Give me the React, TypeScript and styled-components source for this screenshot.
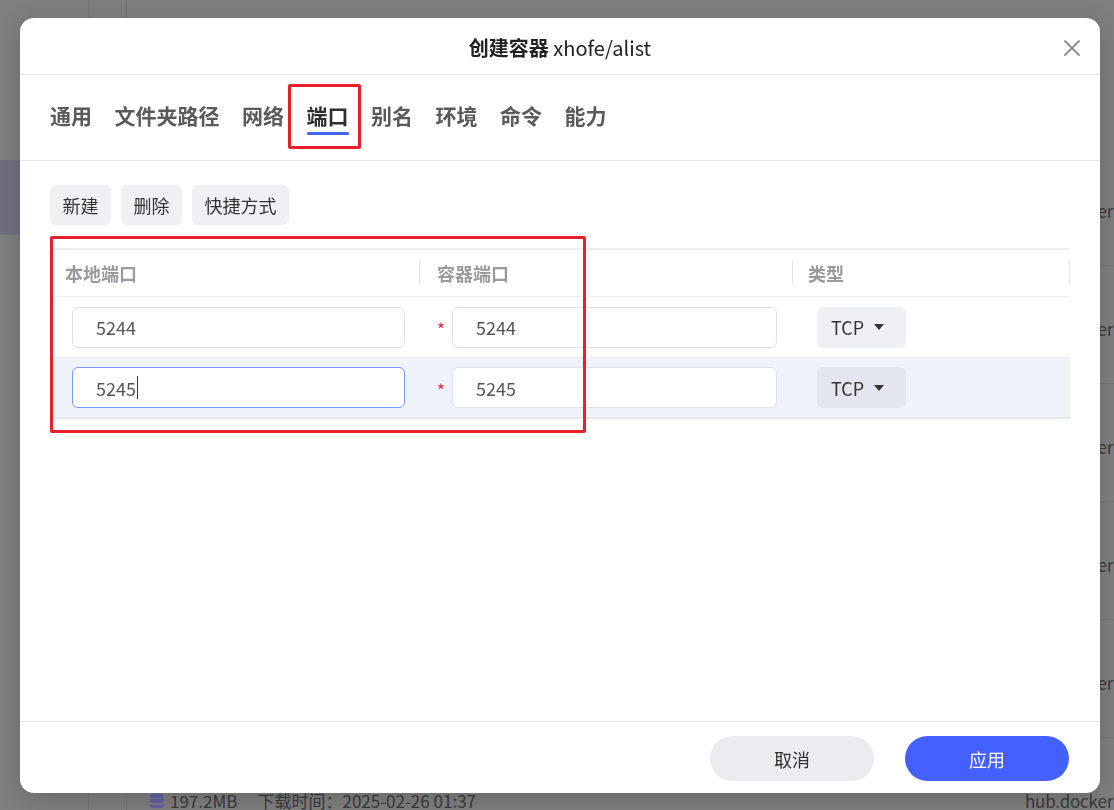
import React from 'react'
import styled, { createGlobalStyle } from 'styled-components'

const GlobalStyle = createGlobalStyle`
  html, body {
    margin: 0;
    padding: 0;
  }
  body {
    width: 1114px;
    height: 810px;
    overflow: hidden;
    background: #7f7f7f;
    font-family: "Noto Sans CJK SC", "Noto Sans", sans-serif;
  }
  * {
    box-sizing: border-box;
  }
`

/* backdrop page (dimmed behind the dialog) */

const Page = styled.div`
  display: flex;
  height: 810px;
  overflow: hidden;
`

const Sidebar = styled.div`
  width: 89px;
  padding-top: 160px;
  border-right: 1px solid #747474;
`

const SideItem = styled.div`
  height: 75px;
  background: #6f707d;
`

const Rail = styled.div`
  width: 38px;
  border-right: 1px solid #747474;
`

const Main = styled.div`
  flex: 1;
  display: flex;
  flex-direction: column;
  min-width: 0;
  overflow: hidden;
`

const MainTop = styled.div`
  height: 148px;
  flex-shrink: 0;
`

const ListRow = styled.div`
  height: 118px;
  flex-shrink: 0;
  padding: 50px 0 0 22px;
  border-bottom: 1px solid #757575;
`

const Meta = styled.div`
  display: grid;
  grid-template-columns: 1fr 89px;
  align-items: center;
  height: 24px;
  font-size: 17px;
  color: #3a3a3a;
  white-space: nowrap;
`

const MetaLeft = styled.div`
  display: flex;
  align-items: center;
  gap: 6px;
`

const MetaTime = styled.span`
  margin-left: 14px;
`

const Source = styled.div`
  font-size: 17px;
  letter-spacing: -0.2px;
`

/* dialog */

const Overlay = styled.div`
  position: fixed;
  inset: 0;
  display: flex;
  padding: 18px 14px 17px 20px;
`

const Modal = styled.div`
  position: relative;
  flex: 1;
  display: flex;
  flex-direction: column;
  background: #fff;
  border-radius: 14px;
  box-shadow: 0 6px 24px rgba(0, 0, 0, 0.18);
  overflow: hidden;
`

const TitleBar = styled.div`
  display: grid;
  grid-template-columns: 1fr auto 1fr;
  align-items: center;
  height: 57px;
  flex-shrink: 0;
  border-bottom: 1px solid #e6e6e9;
`

const Title = styled.div`
  grid-column: 2;
  font-size: 20px;
  color: #222;
  padding-top: 3px;
`

const TitleStrong = styled.span`
  font-weight: 700;
`

const CloseButton = styled.div`
  grid-column: 3;
  justify-self: end;
  margin-right: 19px;
  width: 18px;
  height: 18px;
  display: flex;
  padding-top: 2px;
`

const TabBar = styled.div`
  display: flex;
  align-items: center;
  gap: 22.5px;
  height: 86px;
  flex-shrink: 0;
  padding: 0 30px;
  border-bottom: 1px solid #ececef;
`

const Tab = styled.div<{ $active?: boolean }>`
  display: flex;
  flex-direction: column;
  align-items: stretch;
  font-size: 21px;
  line-height: 28px;
  font-weight: 700;
  color: ${({ $active }) => ($active ? '#2e2e2e' : '#5a5a5a')};

  &::after {
    content: "";
    height: 3px;
    margin-top: 3px;
    border-radius: 2px;
    background: ${({ $active }) => ($active ? '#4563f5' : 'transparent')};
  }
`

const Body = styled.div`
  flex: 1;
  padding: 24px 30px 0;
`

const Toolbar = styled.div`
  display: flex;
  gap: 10px;
`

const ToolButton = styled.div`
  height: 40px;
  padding: 0 12.5px;
  display: flex;
  align-items: center;
  border-radius: 6px;
  background: #eef0f4;
  font-size: 18px;
  line-height: 24px;
  color: #333;
`

const Table = styled.div`
  margin-top: 23px;
  border-top: 2px solid #eeeff3;
`

const Columns = `
  display: grid;
  grid-template-columns: 370px 373px 1fr;
`

const HeaderRow = styled.div`
  ${Columns};
  height: 47px;
  border-bottom: 1px solid #f0f0f3;
`

const HeaderCell = styled.div<{ $pad: number }>`
  display: flex;
  align-items: center;
  justify-content: space-between;
  padding-left: ${({ $pad }) => $pad}px;
  font-size: 18px;
  font-weight: 700;
  color: #9a9a9e;
`

const Divider = styled.span`
  width: 1px;
  height: 24px;
  background: #e4e4e8;
`

const Row = styled.div<{ $selected?: boolean }>`
  ${Columns};
  align-items: center;
  height: 61px;
  background: ${({ $selected }) => ($selected ? '#f0f2fa' : '#fff')};
  border-bottom: ${({ $selected }) => ($selected ? '2px solid #e6e7ee' : '1px solid #ebebf0')};
`

const Cell = styled.div<{ $left: number; $right?: number }>`
  display: flex;
  align-items: center;
  padding-left: ${({ $left }) => $left}px;
  padding-right: ${({ $right }) => $right ?? 0}px;
`

const Star = styled.span`
  width: 15px;
  font-size: 17px;
  line-height: 17px;
  color: #e5283a;
  padding-top: 3px;
`

const Field = styled.div<{ $focused?: boolean }>`
  flex: 1;
  height: 41px;
  display: flex;
  align-items: center;
  padding-left: 23px;
  border: 1px solid ${({ $focused }) => ($focused ? '#7a96ff' : '#dfe1e8')};
  border-radius: 6px;
  background: #fff;
  font-size: 18px;
  color: #555;
`

const Caret = styled.span`
  width: 1px;
  height: 23px;
  margin-left: 1px;
  background: #333;
`

const Select = styled.div<{ $selected?: boolean }>`
  width: 89px;
  height: 41px;
  display: flex;
  align-items: center;
  gap: 10px;
  padding-left: 14px;
  border-radius: 6px;
  background: ${({ $selected }) => ($selected ? '#e3e6ef' : '#eef0f4')};
  font-size: 18px;
  color: #333;
`

const Triangle = styled.span`
  width: 0;
  height: 0;
  border-left: 5px solid transparent;
  border-right: 5px solid transparent;
  border-top: 6px solid #333;
`

const Footer = styled.div`
  height: 72px;
  flex-shrink: 0;
  display: flex;
  justify-content: flex-end;
  gap: 31px;
  padding: 14px 31px 0 0;
  border-top: 1px solid #e6e6e9;
`

const FooterButton = styled.div<{ $primary?: boolean }>`
  width: 164px;
  height: 45px;
  display: flex;
  align-items: center;
  justify-content: center;
  border-radius: 23px;
  background: ${({ $primary }) => ($primary ? '#4461ff' : '#ebebf0')};
  color: ${({ $primary }) => ($primary ? '#fff' : '#333')};
  font-size: 18px;
`

/* red annotation frames drawn over the screenshot */
const Annotation = styled.div<{ $x: number; $y: number; $w: number; $h: number }>`
  position: absolute;
  left: ${({ $x }) => $x}px;
  top: ${({ $y }) => $y}px;
  width: ${({ $w }) => $w}px;
  height: ${({ $h }) => $h}px;
  border: 3px solid #e8202b;
  border-radius: 2px;
  pointer-events: none;
`

const TABS = ['通用', '文件夹路径', '网络', '端口', '别名', '环境', '命令', '能力']

const PORTS = [
  { local: '5244', container: '5244' },
  { local: '5245', container: '5245', selected: true }
]

function DbIcon() {
  return (
    <svg width="15" height="16" viewBox="0 0 15 16">
      <defs>
        <linearGradient id="db" x1="0" y1="0" x2="0" y2="1">
          <stop offset="0" stopColor="#5a66ad" />
          <stop offset="1" stopColor="#6a5a98" />
        </linearGradient>
      </defs>
      <ellipse cx="7.5" cy="3" rx="7" ry="2.6" fill="url(#db)" />
      <path d="M0.5 4.6 C2 6.6 13 6.6 14.5 4.6 V8.6 C13 10.6 2 10.6 0.5 8.6 Z" fill="url(#db)" />
      <path d="M0.5 10.2 C2 12.2 13 12.2 14.5 10.2 V13.4 C13 16 2 16 0.5 13.4 Z" fill="url(#db)" />
    </svg>
  )
}

function CloseIcon() {
  return (
    <svg width="18" height="18" viewBox="0 0 18 18">
      <path d="M2 2 L16 16 M16 2 L2 16" stroke="#8c8c8c" strokeWidth="1.8" strokeLinecap="round" />
    </svg>
  )
}

export default function App() {
  return (
    <>
      <GlobalStyle />
      <Page>
        <Sidebar>
          <SideItem />
        </Sidebar>
        <Rail />
        <Main>
          <MainTop />
          {[0, 1, 2, 3, 4, 5].map((i) => (
            <ListRow key={i}>
              <Meta>
                <MetaLeft>
                  <DbIcon />
                  <span>197.2MB</span>
                  <MetaTime>下载时间：2025-02-26 01:37</MetaTime>
                </MetaLeft>
                <Source>hub.docker</Source>
              </Meta>
            </ListRow>
          ))}
        </Main>
      </Page>

      <Overlay>
        <Modal>
          <TitleBar>
            <Title>
              <TitleStrong>创建容器</TitleStrong> xhofe/alist
            </Title>
            <CloseButton>
              <CloseIcon />
            </CloseButton>
          </TitleBar>

          <TabBar>
            {TABS.map((t) => (
              <Tab key={t} $active={t === '端口'}>
                {t}
              </Tab>
            ))}
          </TabBar>

          <Body>
            <Toolbar>
              <ToolButton>新建</ToolButton>
              <ToolButton>删除</ToolButton>
              <ToolButton>快捷方式</ToolButton>
            </Toolbar>

            <Table>
              <HeaderRow>
                <HeaderCell $pad={15}>
                  本地端口
                  <Divider />
                </HeaderCell>
                <HeaderCell $pad={17}>
                  容器端口
                  <Divider />
                </HeaderCell>
                <HeaderCell $pad={15}>
                  类型
                  <Divider />
                </HeaderCell>
              </HeaderRow>

              {PORTS.map((p) => (
                <Row key={p.local} $selected={p.selected}>
                  <Cell $left={22} $right={15}>
                    <Field $focused={p.selected}>
                      {p.local}
                      {p.selected && <Caret />}
                    </Field>
                  </Cell>
                  <Cell $left={17} $right={16}>
                    <Star>*</Star>
                    <Field>{p.container}</Field>
                  </Cell>
                  <Cell $left={24}>
                    <Select $selected={p.selected}>
                      TCP
                      <Triangle />
                    </Select>
                  </Cell>
                </Row>
              ))}
            </Table>
          </Body>

          <Footer>
            <FooterButton>取消</FooterButton>
            <FooterButton $primary>应用</FooterButton>
          </Footer>

          <Annotation $x={268} $y={66} $w={73} $h={65} />
          <Annotation $x={30} $y={218} $w={536} $h={197} />
        </Modal>
      </Overlay>
    </>
  )
}
